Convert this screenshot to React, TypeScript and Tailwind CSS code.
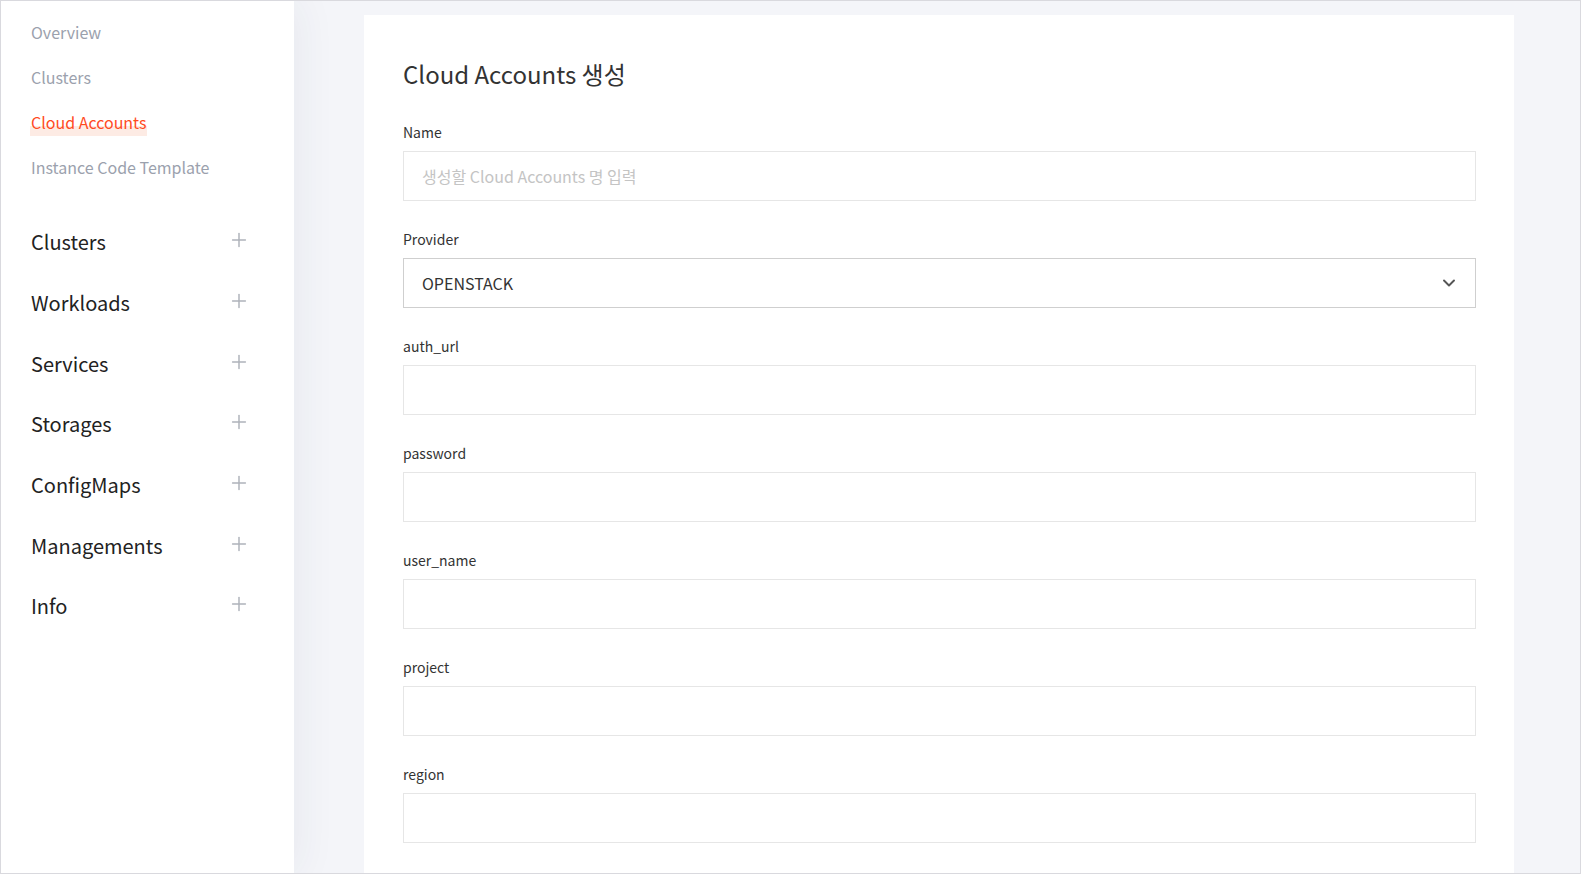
import { Plus, ChevronDown } from "lucide-react"

const subMenu = ["Overview", "Clusters", "Cloud Accounts", "Instance Code Template"]
const mainMenu = ["Clusters", "Workloads", "Services", "Storages", "ConfigMaps", "Managements", "Info"]
const fields = ["auth_url", "password", "user_name", "project", "region"]

function Sidebar() {
  return (
    <aside className="relative z-10 w-[293px] shrink-0 bg-white shadow-[2px_0_40px_rgba(40,50,90,0.07)]">
      <ul className="pt-[19px] pl-[30px]">
        {subMenu.map((item) => (
          <li key={item} className="h-[45px] text-[16px] leading-[24px]">
            {item === "Cloud Accounts" ? (
              <span className="relative inline-block text-[#ff4b1f]">
                <span className="absolute left-[-1px] right-[-1px] bottom-[-2px] h-[10px] bg-[#fdebe4]" />
                <span className="relative">{item}</span>
              </span>
            ) : (
              <span className="text-[#9ba1ad]">{item}</span>
            )}
          </li>
        ))}
      </ul>
      <ul className="mt-[12px] pl-[30px] pr-[44px]">
        {mainMenu.map((item) => (
          <li key={item} className="flex h-[60.7px] items-center justify-between">
            <span className="text-[20px] leading-[28px] text-[#222]">{item}</span>
            <Plus size={22} strokeWidth={1.6} className="mb-[4px] text-[#aeb2ba]" />
          </li>
        ))}
      </ul>
    </aside>
  )
}

function Field({ label }: { label: string }) {
  return (
    <div className="mb-[28px]">
      <label className="block text-[14px] leading-[20px] text-[#333]">{label}</label>
      <input
        type="text"
        className="mt-[9px] block h-[50px] w-full border border-[#e6e6e6] bg-white px-[18px] text-[16px] text-[#333] outline-none"
      />
    </div>
  )
}

export default function App() {
  return (
    <div
      className="flex h-[874px] w-[1581px] overflow-hidden border border-[#d9d9de] bg-[#f4f5f9]"
      style={{ fontFamily: '"Noto Sans CJK KR", "Noto Sans", sans-serif' }}
    >
      <Sidebar />
      <main className="flex-1 pl-[70px] pt-[14px]">
        <div className="min-h-[900px] w-[1150px] bg-white pl-[39px] pr-[38px] pt-[42px]">
          <h1 className="text-[24px] leading-[34px] text-[#333]">Cloud Accounts 생성</h1>

          <div className="mt-[31px] mb-[28px]">
            <label className="block text-[14px] leading-[20px] text-[#333]">Name</label>
            <input
              type="text"
              placeholder="생성할 Cloud Accounts 명 입력"
              className="mt-[9px] block h-[50px] w-full border border-[#e6e6e6] bg-white px-[18px] text-[16px] text-[#333] outline-none placeholder:text-[#c4c4c4]"
            />
          </div>

          <div className="mb-[28px]">
            <label className="block text-[14px] leading-[20px] text-[#333]">Provider</label>
            <div className="mt-[9px] flex h-[50px] w-full items-center justify-between border border-[#cfcfcf] bg-white pl-[18px] pr-[16px]">
              <span className="text-[16px] text-[#333]">OPENSTACK</span>
              <ChevronDown size={20} strokeWidth={2.3} className="text-[#555]" />
            </div>
          </div>

          {fields.map((f) => (
            <Field key={f} label={f} />
          ))}
        </div>
      </main>
    </div>
  )
}
